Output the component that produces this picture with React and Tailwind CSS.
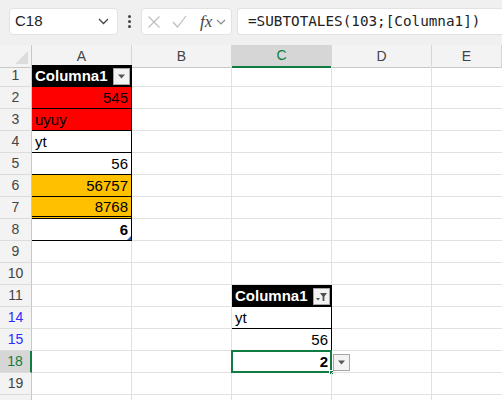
import React from 'react';

const ROW = 'grid grid-cols-[32px_100px_100px_100px_100px_1fr]';
const font = { fontFamily: '"Liberation Sans", Arial, sans-serif' };

const DropButton = ({ filter }) => (
  <span className="flex h-[17px] w-[17px] items-center justify-center border border-[#a6a6a6] bg-[#f3f3f3]">
    {filter ? (
      <svg width="13" height="11" viewBox="0 0 13 11">
        <path d="M5 2h7l-2.6 3.4V10H7.6V5.4z" fill="#505050" />
        <path d="M1 7h4l-2 2.4z" fill="#505050" />
      </svg>
    ) : (
      <svg width="9" height="5" viewBox="0 0 9 5">
        <path d="M1 0.5h7L4.5 4.5z" fill="#555" />
      </svg>
    )}
  </span>
);

const RowHead = ({ n, blue, active }) => (
  <div
    className={
      'flex h-[22px] items-center justify-center border-b border-[#dcdcdc] text-[14px] ' +
      (active
        ? 'border-r-2 border-r-[#107c41] bg-[#d6d6d6] text-[#107c41]'
        : 'border-r border-r-[#c8c8c8] bg-[#f3f3f3] ' + (blue ? 'text-[#2d2dff]' : 'text-[#444]'))
    }
  >
    {n}
  </div>
);

const Cell = ({ children, className = '' }) => (
  <div className={'relative flex h-[22px] items-center border-b border-r border-[#e1e1e1] px-[3px] pt-[2px] text-[15px] text-black ' + className}>
    {children}
  </div>
);

const tableA = {
  1: { head: true },
  2: { v: '545', right: true, bg: 'bg-[#ff0000]' },
  3: { v: 'uyuy', bg: 'bg-[#ff0000]' },
  4: { v: 'yt' },
  5: { v: '56', right: true },
  6: { v: '56757', right: true, bg: 'bg-[#ffc000]' },
  7: { v: '8768', right: true, bg: 'bg-[#ffc000]', dbl: true },
  8: { v: '6', right: true, bold: true, last: true },
};

const tableC = {
  11: { head: true, filter: true },
  14: { v: 'yt' },
  15: { v: '56', right: true },
  18: { v: '2', right: true, bold: true, sel: true },
};

const TableCell = ({ c }) => {
  if (!c) return <Cell />;
  if (c.head)
    return (
      <Cell className="justify-between !border-black bg-black pr-[1px] font-bold text-white">
        <span className="text-white">Columna1</span>
        <DropButton filter={c.filter} />
      </Cell>
    );
  return (
    <Cell
      className={
        '!border-r-black ' +
        (c.dbl ? '!border-b-[3px] border-double !border-b-black ' : '!border-b-black ') +
        (c.bg || '') +
        (c.right ? ' justify-end' : '') +
        (c.bold ? ' font-bold' : '')
      }
    >
      {c.v}
      {c.last && (
        <span className="absolute bottom-[0px] right-[0px] h-0 w-0 border-b-[4px] border-l-[4px] border-b-[#2f5ea8] border-l-transparent" />
      )}
      {c.sel && (
        <>
          <span className="pointer-events-none absolute inset-[-1px] border-2 border-[#107c41]" />
          <span className="absolute bottom-[-3px] right-[-3px] h-[5px] w-[5px] border border-white bg-[#107c41]" />
          <span className="absolute right-[-19px] top-[3px]">
            <DropButton />
          </span>
        </>
      )}
    </Cell>
  );
};

const rows = [1, 2, 3, 4, 5, 6, 7, 8, 9, 10, 11, 14, 15, 18, 19];

export default function App() {
  return (
    <div className="h-[400px] w-[502px] overflow-hidden bg-white" style={font}>
      <div className="flex h-[45px] items-start gap-0 bg-[#f0f0f0] pt-[8px]">
        <div className="ml-[9px] flex h-[27px] w-[109px] items-center justify-between rounded-[4px] border border-[#e2e2e2] bg-white pl-[5px] pr-[8px]">
          <span className="text-[15px] text-[#222]">C18</span>
          <svg width="11" height="7" viewBox="0 0 11 7">
            <path d="M1 1l4.5 4.5L10 1" fill="none" stroke="#444" strokeWidth="1.3" />
          </svg>
        </div>
        <div className="flex h-[27px] w-[23px] flex-col items-center justify-center gap-[2px]">
          <span className="h-[3px] w-[3px] rounded-full bg-[#444]" />
          <span className="h-[3px] w-[3px] rounded-full bg-[#444]" />
          <span className="h-[3px] w-[3px] rounded-full bg-[#444]" />
        </div>
        <div className="flex h-[27px] w-[91px] items-center rounded-[4px] border border-[#e2e2e2] bg-white pl-[5px]">
          <svg width="14" height="14" viewBox="0 0 14 14">
            <path d="M1.5 1.5l11 11M12.5 1.5l-11 11" stroke="#bdbdbd" strokeWidth="1.2" />
          </svg>
          <svg className="ml-[11px]" width="15" height="13" viewBox="0 0 15 13">
            <path d="M1 7l4.5 5L14 1" fill="none" stroke="#bdbdbd" strokeWidth="1.2" />
          </svg>
          <span className="ml-[13px] text-[17px] italic text-[#444]" style={{ fontFamily: '"Liberation Serif", serif' }}>
            fx
          </span>
          <svg className="ml-[4px]" width="10" height="6" viewBox="0 0 10 6">
            <path d="M1 1l4 4 4-4" fill="none" stroke="#888" strokeWidth="1.1" />
          </svg>
        </div>
        <div className="ml-[5px] flex h-[27px] flex-1 items-center rounded-l-[4px] border border-r-0 border-[#e2e2e2] bg-white pl-[10px]">
          <span className="text-[14.3px] text-[#222]" style={{ fontFamily: '"DejaVu Sans Mono", monospace' }}>
            =SUBTOTALES(103;[Columna1])
          </span>
        </div>
      </div>

      <div className={ROW + ' h-[20px]'}>
        <div className="relative border-b border-r border-[#c8c8c8] bg-[#f3f3f3]">
          <span className="absolute bottom-[3px] right-[3px] h-0 w-0 border-b-[13px] border-l-[13px] border-b-[#dcdcdc] border-l-transparent" />
        </div>
        {['A', 'B', 'C', 'D', 'E'].map((l) => (
          <div
            key={l}
            className={
              'flex items-center justify-center border-r border-[#d6d6d6] text-[14px] ' +
              (l === 'C'
                ? 'border-b-2 border-b-[#107c41] bg-[#d6d6d6] text-[#107c41]'
                : 'border-b border-b-[#c8c8c8] bg-[#f3f3f3] text-[#444]')
            }
          >
            {l}
          </div>
        ))}
      </div>

      {rows.map((n) => (
        <div key={n} className={ROW}>
          <RowHead n={n} blue={n === 14 || n === 15} active={n === 18} />
          <TableCell c={tableA[n]} />
          <Cell />
          <TableCell c={tableC[n]} />
          <Cell />
          <Cell className="border-r-0" />
        </div>
      ))}

      <div className={ROW + ' h-[22px]'}>
        <div className="border-r border-[#c8c8c8] bg-[#f3f3f3]" />
        <div className="border-r border-[#e1e1e1]" />
        <div className="border-r border-[#e1e1e1]" />
        <div className="border-r border-[#e1e1e1]" />
        <div className="border-r border-[#e1e1e1]" />
        <div />
      </div>
    </div>
  );
}
